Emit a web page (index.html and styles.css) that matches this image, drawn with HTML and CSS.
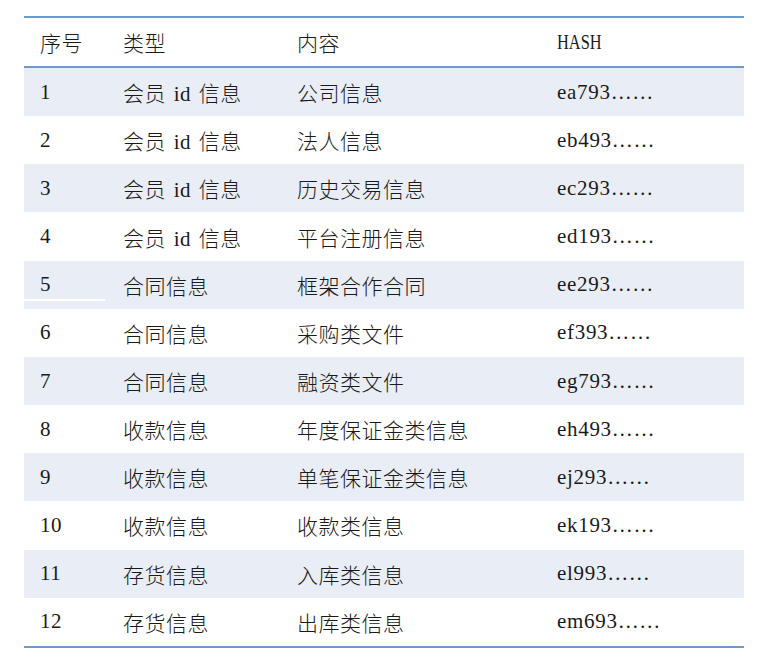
FILE: index.html
```html
<!DOCTYPE html>
<html lang="zh-CN">
<head>
<meta charset="utf-8">
<title>信息表</title>
<link rel="stylesheet" href="styles.css">
</head>
<body>
<table class="info-table">
  <colgroup>
    <col class="c-no">
    <col class="c-type">
    <col class="c-content">
    <col class="c-hash">
  </colgroup>
  <thead>
    <tr><th>序号</th><th>类型</th><th>内容</th><th><span class="narrow">HASH</span></th></tr>
  </thead>
  <tbody>
    <tr><td>1</td><td class="type">会员 id 信息</td><td>公司信息</td><td class="hash">ea793……</td></tr>
    <tr><td>2</td><td class="type">会员 id 信息</td><td>法人信息</td><td class="hash">eb493……</td></tr>
    <tr><td>3</td><td class="type">会员 id 信息</td><td>历史交易信息</td><td class="hash">ec293……</td></tr>
    <tr><td>4</td><td class="type">会员 id 信息</td><td>平台注册信息</td><td class="hash">ed193……</td></tr>
    <tr><td class="marked">5</td><td class="type">合同信息</td><td>框架合作合同</td><td class="hash">ee293……</td></tr>
    <tr><td>6</td><td class="type">合同信息</td><td>采购类文件</td><td class="hash">ef393……</td></tr>
    <tr><td>7</td><td class="type">合同信息</td><td>融资类文件</td><td class="hash">eg793……</td></tr>
    <tr><td>8</td><td class="type">收款信息</td><td>年度保证金类信息</td><td class="hash">eh493……</td></tr>
    <tr><td>9</td><td class="type">收款信息</td><td>单笔保证金类信息</td><td class="hash">ej293……</td></tr>
    <tr><td>10</td><td class="type">收款信息</td><td>收款类信息</td><td class="hash">ek193……</td></tr>
    <tr><td>11</td><td class="type">存货信息</td><td>入库类信息</td><td class="hash">el993……</td></tr>
    <tr><td>12</td><td class="type">存货信息</td><td>出库类信息</td><td class="hash">em693……</td></tr>
  </tbody>
</table>
</body>
</html>
```

FILE: styles.css
```css
html, body {
  margin: 0;
  padding: 0;
  background: #ffffff;
}

body {
  padding: 16px 30px 0 24px;
  font-family: "Liberation Serif", "Noto Sans CJK SC", serif;
  font-size: 21px;
  font-weight: 300;
  letter-spacing: 0.5px;
  color: #1a1a1a;
}

.info-table {
  width: 720px;
  table-layout: fixed;
  border-collapse: separate;
  border-spacing: 0;
}

.c-no { width: 83px; }
.c-type { width: 174px; }
.c-content { width: 260px; }
.c-hash { width: 203px; }

.info-table th,
.info-table td {
  padding: 0 0 0 16px;
  text-align: left;
  font-weight: 300;
  white-space: nowrap;
  vertical-align: middle;
}

.info-table th {
  height: 48px;
  border-top: 2px solid #6d9bcf;
  border-bottom: 2px solid #6d9bcf;
}

.info-table tbody td {
  height: 48.17px;
}

.info-table tbody tr:nth-child(odd) td {
  background: #e9edf5;
}

.info-table tbody tr:last-child td {
  border-bottom: 2px solid #6d9bcf;
}

.type {
  word-spacing: 2px;
}

.hash {
  letter-spacing: 0.7px;
}

.narrow {
  display: inline-block;
  letter-spacing: 0;
  transform: scaleX(0.78);
  transform-origin: left center;
}

.marked {
  position: relative;
}

.marked::after {
  content: "";
  position: absolute;
  left: 0;
  bottom: 8px;
  width: 81px;
  height: 2px;
  background: #ffffff;
}
```
